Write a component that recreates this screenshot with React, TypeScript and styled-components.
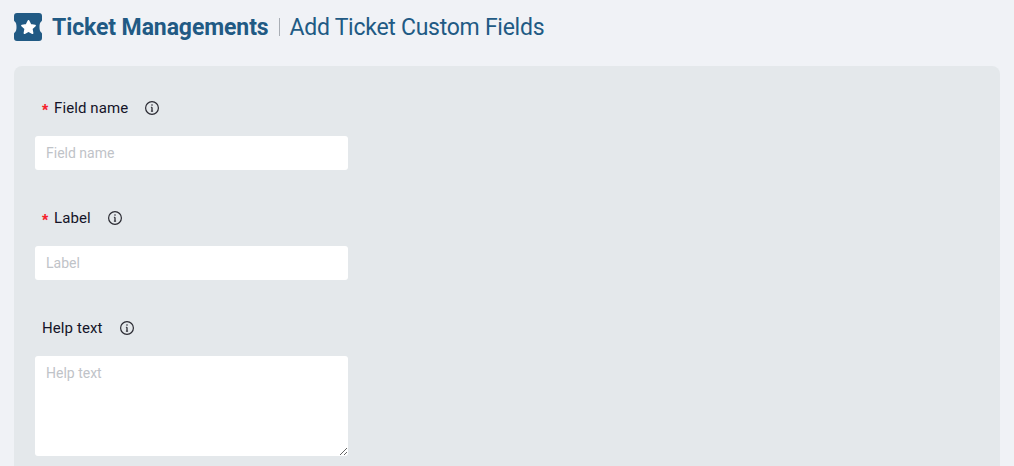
import React from 'react'
import styled, { createGlobalStyle } from 'styled-components'

const GlobalStyle = createGlobalStyle`
  html, body {
    margin: 0;
    padding: 0;
    height: 466px;
    overflow: hidden;
    background: #f0f2f6;
    font-family: Roboto, "Noto Sans", sans-serif;
  }
`

const Page = styled.div`
  box-sizing: border-box;
  height: 466px;
  padding: 13px 14px 0;
  overflow: hidden;
`

const Header = styled.div`
  display: flex;
  align-items: center;
  height: 28px;
  margin-bottom: 25px;
  color: #215a84;
`

const Logo = styled.svg`
  width: 28px;
  height: 28px;
  margin-right: 10px;
  flex-shrink: 0;
`

const Title = styled.h1`
  margin: 0;
  font-size: 23px;
  font-weight: 700;
  letter-spacing: -0.1px;
`

const Divider = styled.span`
  width: 1px;
  height: 18px;
  margin: 0 10px 0 10px;
  background: #a9aeb5;
`

const SubTitle = styled.h2`
  margin: 0;
  font-size: 23px;
  font-weight: 400;
  letter-spacing: -0.27px;
`

const Panel = styled.form`
  height: 420px;
  padding: 26px 21px 0;
  background: #e4e8eb;
  border-radius: 8px;
`

const Field = styled.div`
  margin-bottom: 32px;
`

const LabelRow = styled.div`
  display: flex;
  align-items: center;
  height: 32px;
  margin-bottom: 12px;
  padding-left: 7px;
`

const Required = styled.span`
  width: 12px;
  margin-top: 5px;
  color: #f5222d;
  font-size: 16px;
  font-weight: 700;
  font-family: "Liberation Sans", sans-serif;
`

const Label = styled.label`
  margin-right: 16px;
  color: #141428;
  font-size: 15px;
  letter-spacing: 0.1px;
`

const InfoIcon = styled.svg`
  width: 16px;
  height: 16px;
`

const TextInput = styled.input`
  display: block;
  box-sizing: border-box;
  width: 313px;
  height: 34px;
  padding: 0 11px;
  border: none;
  border-radius: 3px;
  background: #fff;
  font: 400 14px Roboto, "Noto Sans", sans-serif;
  outline: none;

  &::placeholder {
    color: #bfc3c8;
  }
`

const TextArea = styled.textarea`
  display: block;
  box-sizing: border-box;
  width: 313px;
  height: 100px;
  padding: 9px 11px;
  border: none;
  border-radius: 3px;
  background: #fff;
  font: 400 14px Roboto, "Noto Sans", sans-serif;
  outline: none;

  &::placeholder {
    color: #bfc3c8;
  }
`

const Info = () => (
  <InfoIcon viewBox="0 0 16 16" fill="none" stroke="#2b2b33">
    <circle cx="8" cy="8" r="6.4" strokeWidth="1.2" />
    <path d="M8 7.2v4" strokeWidth="1.3" />
    <path d="M6.9 7.3H8M6.9 11.2h2.2" strokeWidth="1" />
    <circle cx="8" cy="5" r="0.8" fill="#2b2b33" stroke="none" />
  </InfoIcon>
)

export default function App() {
  return (
    <>
      <GlobalStyle />
      <Page>
        <Header>
          <Logo viewBox="0 0 28 28">
            <path
              fill="#215a84"
              d="M3 0h22a3 3 0 0 1 3 3v4c0 1-.6 1.500-1.200 2-.8.8-1.300 2.500-1.300 5s.5 4.200 1.300 5c.6.500 1.200 1 1.200 2v4a3 3 0 0 1-3 3H3a3 3 0 0 1-3-3v-4c0-1 .6-1.500 1.200-2 .8-.8 1.300-2.500 1.300-5S2 9.800 1.200 9C.6 8.500 0 8 0 7V3a3 3 0 0 1 3-3z"
            />
            <path
              fill="#fff"
              stroke="#fff"
              strokeWidth="1.8"
              strokeLinejoin="round"
              d="M14.500 7.900l2 4 4.500.7-3.300 3.100.8 4.400-4-2.100-4 2.100.8-4.400-3.300-3.100 4.500-.7z"
            />
          </Logo>
          <Title>Ticket Managements</Title>
          <Divider />
          <SubTitle>Add Ticket Custom Fields</SubTitle>
        </Header>
        <Panel>
          <Field>
            <LabelRow>
              <Required>*</Required>
              <Label>Field name</Label>
              <Info />
            </LabelRow>
            <TextInput placeholder="Field name" />
          </Field>
          <Field>
            <LabelRow>
              <Required>*</Required>
              <Label>Label</Label>
              <Info />
            </LabelRow>
            <TextInput placeholder="Label" />
          </Field>
          <Field>
            <LabelRow>
              <Label>Help text</Label>
              <Info />
            </LabelRow>
            <TextArea placeholder="Help text" />
          </Field>
        </Panel>
      </Page>
    </>
  )
}
